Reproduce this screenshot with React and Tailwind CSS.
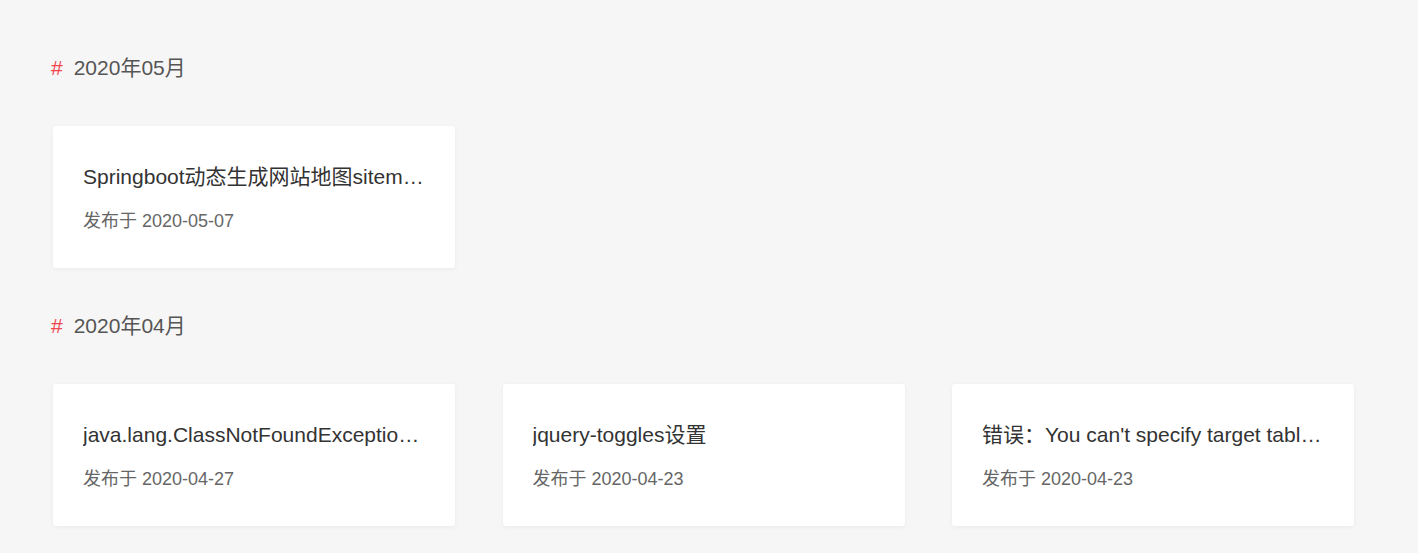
import React from 'react'

const groups = [
  {
    month: '2020年05月',
    posts: [
      { title: 'Springboot动态生成网站地图sitemap.xml', date: '2020-05-07' },
    ],
  },
  {
    month: '2020年04月',
    posts: [
      { title: 'java.lang.ClassNotFoundException: com.mysql.jdbc.Driver', date: '2020-04-27' },
      { title: 'jquery-toggles设置', date: '2020-04-23' },
      { title: "错误：You can't specify target table for update in FROM clause", date: '2020-04-23' },
    ],
  },
];

const PostCard = ({ post }) => (
  <div className="w-[402px] h-[142px] bg-white rounded-[3px] shadow-[0_1px_4px_rgba(0,0,0,0.05)] px-[30px] pt-[38px]">
    <div className="text-[21px] leading-[26px] text-[#333] truncate">{post.title}</div>
    <div className="mt-[20px] text-[18px] leading-[22px] text-[#666]">发布于 {post.date}</div>
  </div>
);

const App = () => {
  return (
    <div
      className="min-h-screen bg-[#f6f6f6] pl-[53px] pt-[54px]"
      style={{ fontFamily: '"Liberation Sans", Arial, "Noto Sans CJK SC", sans-serif' }}
    >
      {groups.map((group, i) => (
        <section key={i} className="mb-[44px]">
          <h2 className="flex items-center h-[28px] -ml-[2px] text-[21px] font-normal text-[#555]">
            <span className="text-[#f0464f] mr-[11px]">#</span>
            {group.month}
          </h2>
          <div className="mt-[44px] grid grid-cols-[repeat(3,402px)] gap-x-[47.5px]">
            {group.posts.map((post, j) => (
              <PostCard key={j} post={post} />
            ))}
          </div>
        </section>
      ))}
    </div>
  );
};

export default App;
